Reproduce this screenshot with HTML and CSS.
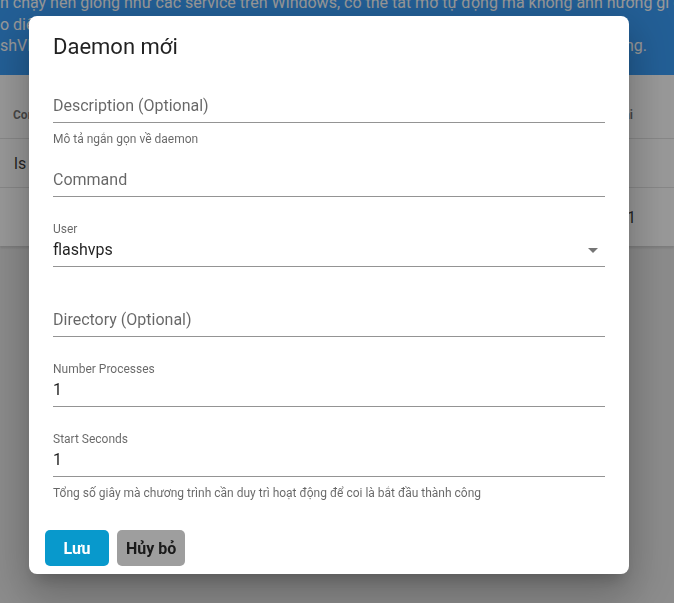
FILE: index.html
```html
<!DOCTYPE html>
<html lang="vi">
<head>
<meta charset="utf-8">
<title>Daemon mới</title>
<link rel="stylesheet" href="styles.css">
</head>
<body>
<div class="page">
  <div class="banner">
    <div class="banner-lines">
      <div class="bline">n chạy nền giống như các service trên Windows, có thể tắt mở tự động mà không ảnh hưởng gì đến hệ thống</div>
      <div class="bline">o diện quản lý, bạn có thể thêm, sửa, xóa và khởi động lại các daemon một cách dễ dàng</div>
      <div class="bline split"><span>shVPS sẽ tự động giám sát và khởi động lại</span><span>ng.</span></div>
    </div>
  </div>
  <div class="table-card">
    <div class="trow thead"><span>Command</span><span>Trạng thái</span></div>
    <div class="trow"><span>ls -la</span><span></span></div>
    <div class="trow last"><span></span><span>1</span></div>
  </div>
</div>

<div class="overlay"></div>

<div class="dialog">
  <div class="dialog-title">Daemon mới</div>
  <div class="dialog-body">
    <div class="field">
      <div class="flabel"></div>
      <div class="finput placeholder">Description (Optional)</div>
      <div class="details hint">Mô tả ngắn gọn về daemon</div>
    </div>
    <div class="field">
      <div class="flabel"></div>
      <div class="finput placeholder">Command</div>
      <div class="details"></div>
    </div>
    <div class="field">
      <div class="flabel">User</div>
      <div class="finput select"><span>flashvps</span>
        <svg class="caret" viewBox="0 0 24 24" width="24" height="24"><path d="M7,10L12,15L17,10H7Z"/></svg>
      </div>
      <div class="details"></div>
    </div>
    <div class="field">
      <div class="flabel"></div>
      <div class="finput placeholder">Directory (Optional)</div>
      <div class="details"></div>
    </div>
    <div class="field">
      <div class="flabel">Number Processes</div>
      <div class="finput">1</div>
      <div class="details"></div>
    </div>
    <div class="field">
      <div class="flabel">Start Seconds</div>
      <div class="finput">1</div>
      <div class="details hint">Tổng số giây mà chương trình cần duy trì hoạt động để coi là bắt đầu thành công</div>
    </div>
  </div>
  <div class="dialog-actions">
    <button class="btn primary">Lưu</button>
    <button class="btn secondary">Hủy bỏ</button>
  </div>
</div>
</body>
</html>
```

FILE: styles.css
```css
* { box-sizing: border-box; }
html, body { margin: 0; padding: 0; }
body {
  font-family: Roboto, "Noto Sans", "Liberation Sans", sans-serif;
  background: #e7e7e7;
  width: 674px;
  height: 603px;
  overflow: hidden;
}
.page { width: 674px; }
.banner {
  height: 75px;
  background: #2694fa;
  color: #ffffff;
  font-size: 16px;
  overflow: hidden;
}
.banner-lines { margin-top: -8px; }
.bline {
  line-height: 21.5px;
  white-space: nowrap;
  overflow: hidden;
}
.bline.split {
  display: flex;
  justify-content: space-between;
  padding-right: 27px;
}
.table-card {
  background: #fff;
  padding-top: 16px;
  box-shadow: 0 2px 2px rgba(0,0,0,.12);
}
.trow {
  display: flex;
  justify-content: space-between;
  align-items: center;
  height: 49px;
  padding: 0 38px 0 14px;
  border-bottom: 1px solid rgba(0,0,0,.12);
  font-size: 16px;
  color: rgba(0,0,0,.87);
}
.trow.thead {
  height: 48px;
  font-size: 12px;
  font-weight: 700;
  color: rgba(0,0,0,.6);
  padding-left: 13px;
  padding-right: 41px;
}
.trow.last { height: 58px; border-bottom: none; }
.overlay {
  position: fixed;
  inset: 0;
  background: rgba(33,33,33,.46);
}
.dialog {
  position: absolute;
  left: 29px;
  top: 16px;
  width: 600px;
  background: #fff;
  border-radius: 8px;
  box-shadow: 0 11px 15px -7px rgba(0,0,0,.2), 0 24px 38px 3px rgba(0,0,0,.14), 0 9px 46px 8px rgba(0,0,0,.12);
}
.dialog-title {
  padding: 15px 24px 13px;
  font-size: 22px;
  line-height: 32px;
  color: rgba(0,0,0,.87);
}
.dialog-body { padding: 0 24px 18px; }
.field { display: flex; flex-direction: column; }
.flabel {
  height: 14px;
  font-size: 12px;
  line-height: 18px;
  color: rgba(0,0,0,.6);
}
.finput {
  height: 33px;
  display: flex;
  align-items: center;
  font-size: 16px;
  color: rgba(0,0,0,.87);
  border-bottom: 1px solid #949494;
  padding-bottom: 1px;
}
.finput.placeholder { color: rgba(0,0,0,.6); }
.finput.select { justify-content: space-between; }
.caret { fill: rgba(0,0,0,.54); display: block; }
.details {
  padding-top: 9px;
  min-height: 23px;
  font-size: 12px;
  line-height: 14px;
  color: rgba(0,0,0,.6);
}
.details.hint { padding-bottom: 4px; }
.dialog-actions {
  display: flex;
  gap: 8px;
  padding: 8px 16px 8px;
}
.btn {
  height: 36px;
  min-width: 64px;
  padding: 0 9px;
  border: none;
  border-radius: 5px;
  font-family: Roboto, "Liberation Sans", sans-serif;
  font-size: 16px;
  font-weight: 700;
}
.btn.primary { background: #0899cc; color: #fff; }
.btn.secondary { background: #9e9e9e; color: #1a1a1a; }
```
